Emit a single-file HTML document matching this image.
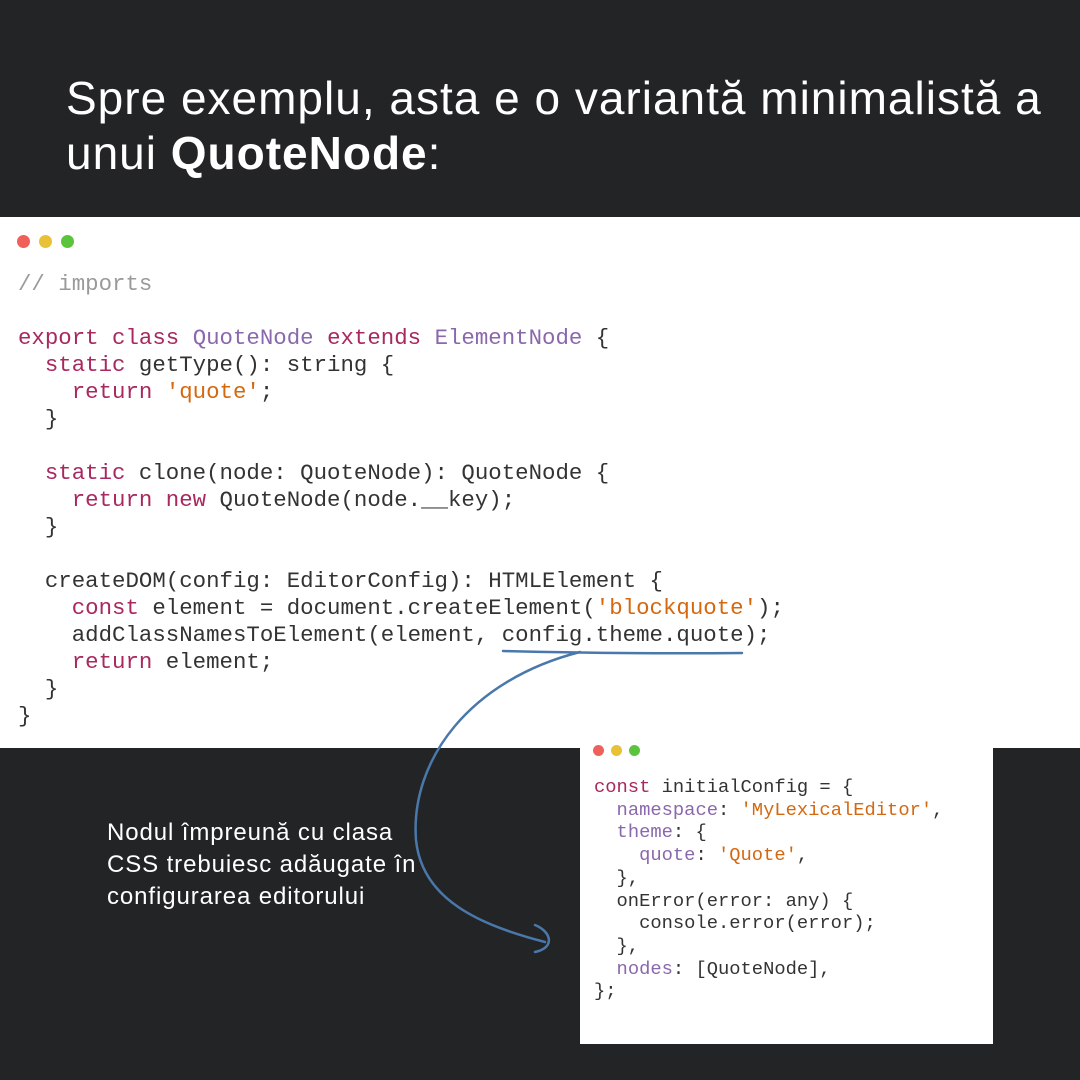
<!DOCTYPE html>
<html><head><meta charset="utf-8"><style>
*{margin:0;padding:0;box-sizing:border-box}
body{width:1080px;height:1080px;background:#232425;position:relative;overflow:hidden;font-family:"Liberation Sans",sans-serif}
.title{position:absolute;left:66px;top:71px;color:#fff;font-size:46px;line-height:55px;letter-spacing:1px}
.panel{position:absolute;background:#fff}
.dots{position:absolute;display:flex;gap:9px}
.dots i{display:block;border-radius:50%}
.r{background:#f0605a}.y{background:#e8c234}.g{background:#5ac53c}
pre{position:absolute;font-family:"Liberation Mono",monospace;color:#333;white-space:pre}
.k{color:#a8285f}.c{color:#8a68ad}.s{color:#d5680f}.cm{color:#9a9a9a}
.note{position:absolute;left:107px;top:817px;color:#fff;font-size:24px;line-height:32px;letter-spacing:0.9px}
</style></head><body>
<div class="title">Spre exemplu, asta e o variantă minimalistă a<br>unui <b>QuoteNode</b>:</div>
<div class="panel" style="left:0;top:217px;width:1080px;height:531px">
<div class="dots" style="left:17px;top:18px"><i class="r" style="width:13px;height:13px"></i><i class="y" style="width:13px;height:13px"></i><i class="g" style="width:13px;height:13px"></i></div>
<pre style="left:18px;top:54px;font-size:22.4px;line-height:27px"><span class="cm">// imports</span>

<span class="k">export class</span> <span class="c">QuoteNode</span> <span class="k">extends</span> <span class="c">ElementNode</span> {
  <span class="k">static</span> getType(): string {
    <span class="k">return</span> <span class="s">'quote'</span>;
  }

  <span class="k">static</span> clone(node: QuoteNode): QuoteNode {
    <span class="k">return new</span> QuoteNode(node.__key);
  }

  createDOM(config: EditorConfig): HTMLElement {
    <span class="k">const</span> element = document.createElement(<span class="s">'blockquote'</span>);
    addClassNamesToElement(element, config.theme.quote);
    <span class="k">return</span> element;
  }
}</pre>
</div>
<div class="panel" style="left:580px;top:733px;width:413px;height:311px">
<div class="dots" style="left:13px;top:12px;gap:7px"><i class="r" style="width:11px;height:11px"></i><i class="y" style="width:11px;height:11px"></i><i class="g" style="width:11px;height:11px"></i></div>
<pre style="left:14px;top:43px;font-size:18.8px;line-height:22.7px"><span class="k">const</span> initialConfig = {
  <span class="c">namespace</span>: <span class="s">'MyLexicalEditor'</span>,
  <span class="c">theme</span>: {
    <span class="c">quote</span>: <span class="s">'Quote'</span>,
  },
  onError(error: any) {
    console.error(error);
  },
  <span class="c">nodes</span>: [QuoteNode],
};</pre>
</div>
<svg style="position:absolute;left:0;top:0" width="1080" height="1080">
<g fill="none" stroke="#4a78aa" stroke-width="2.5" stroke-linecap="round">
<path d="M503 651 Q620 654 742 653"/>
<path d="M580 652 C470 680 410 760 416 840 C422 900 480 925 545 942"/>
<path d="M535 925 C552 932 555 948 535 952"/>
</g>
</svg>
<div class="note">Nodul împreună cu clasa<br>CSS trebuiesc adăugate în<br>configurarea editorului</div>
</body></html>
